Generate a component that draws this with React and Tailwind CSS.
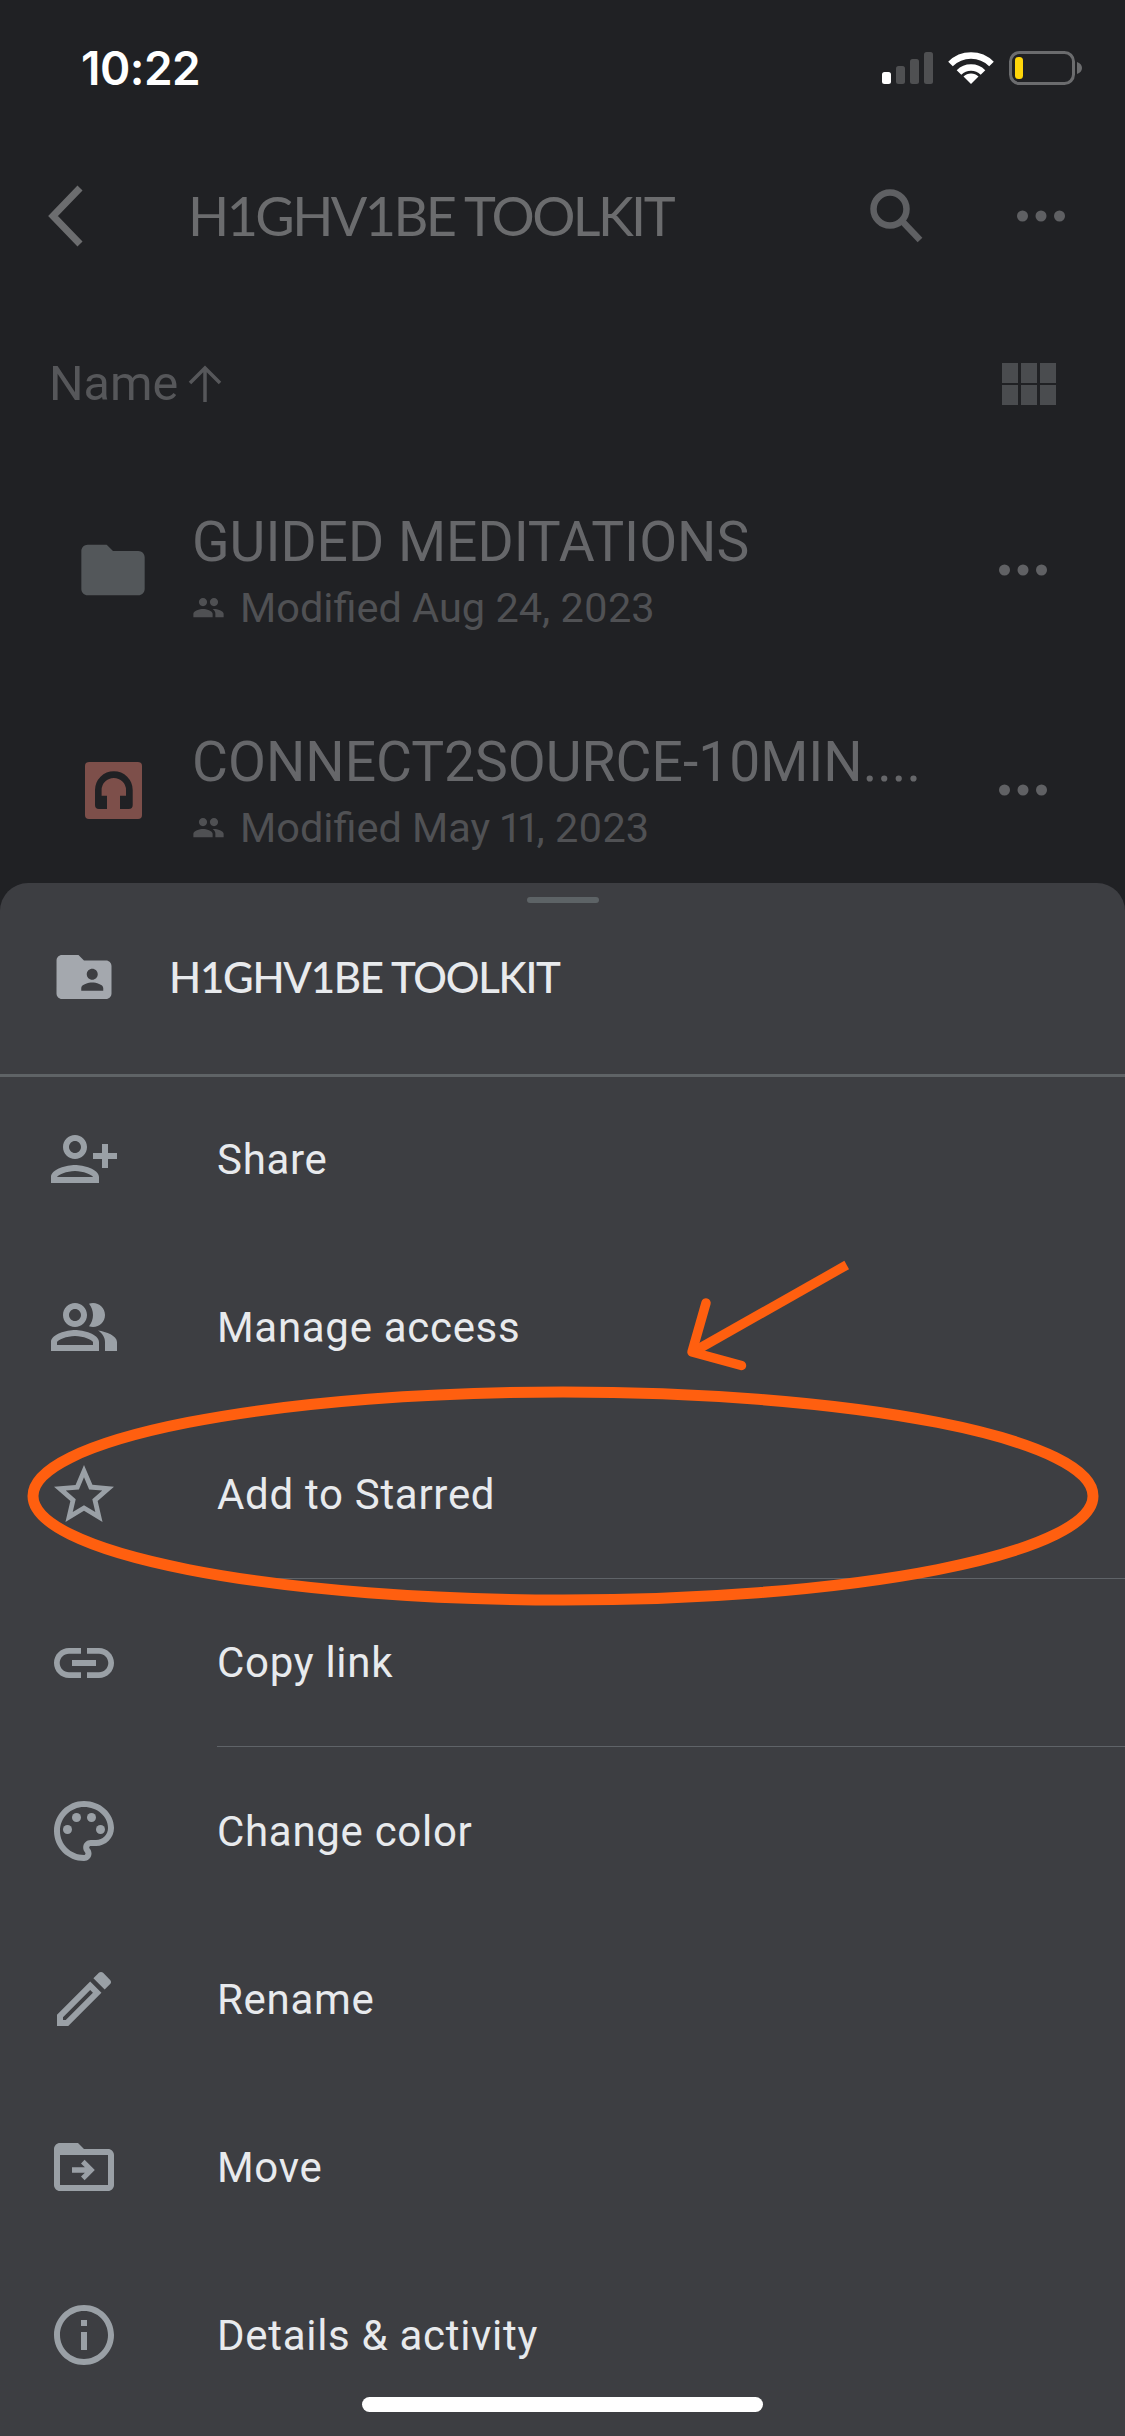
import React from 'react';

const PEOPLE = 'M16 11c1.66 0 2.99-1.34 2.99-3S17.66 5 16 5c-1.66 0-3 1.34-3 3s1.34 3 3 3zm-8 0c1.66 0 2.99-1.34 2.99-3S9.66 5 8 5C6.34 5 5 6.34 5 8s1.34 3 3 3zm0 2c-2.33 0-7 1.17-7 3.5V19h14v-2.5c0-2.33-4.67-3.5-7-3.5zm8 0c-.29 0-.62.02-.97.05 1.16.84 1.97 1.97 1.97 3.45V19h6v-2.5c0-2.33-4.67-3.5-7-3.5z';

function Icon({ children, className = 'w-[72px] h-[72px]' }) {
  return (
    <svg viewBox="0 0 24 24" fill="currentColor" className={className}>
      {children}
    </svg>
  );
}

function Dots({ className }) {
  return (
    <svg viewBox="0 0 48 12" fill="currentColor" className={className}>
      <circle cx="5.5" cy="6" r="5.5" />
      <circle cx="24" cy="6" r="5.5" />
      <circle cx="42.5" cy="6" r="5.5" />
    </svg>
  );
}

function StatusIcons() {
  return (
    <svg viewBox="0 0 200 34" className="w-[200px] h-[34px]">
      <rect x="0" y="21" width="9" height="12" rx="2.5" fill="#ffffff" />
      <rect x="14" y="15" width="9" height="18" rx="2.5" fill="#4f5052" />
      <rect x="28" y="8" width="9" height="25" rx="2.5" fill="#4f5052" />
      <rect x="42" y="1" width="9" height="32" rx="2.5" fill="#4f5052" />
      <g fill="none" stroke="#ffffff" strokeWidth="6.5">
        <path d="M68.5 13 A29 29 0 0 1 109.5 13" />
        <path d="M77 21.5 A17 17 0 0 1 101 21.5" />
      </g>
      <path d="M89 33 L81.5 25.5 A10.6 10.6 0 0 1 96.5 25.5 Z" fill="#ffffff" />
      <rect x="128.5" y="1.5" width="63" height="31" rx="9" fill="none" stroke="#6b6c6e" strokeWidth="3" />
      <rect x="133" y="6" width="8" height="22" rx="3.5" fill="#ffd60a" />
      <path d="M195 11 C198 12 200 14 200 17 C200 20 198 22 195 23 Z" fill="#6b6c6e" />
    </svg>
  );
}

function FileRow({ icon, name, modified }) {
  return (
    <div className="h-[220px] flex items-center pl-[75px] pr-[78px]">
      <div className="w-[76px] flex justify-center shrink-0">{icon}</div>
      <div className="ml-[41px] flex-1 min-w-0 pt-[2px]">
        <div className="text-[55.2px] leading-[62px] text-[#66676a] whitespace-nowrap">{name}</div>
        <div className="mt-[11px] flex items-center text-[#4f5053]">
          <Icon className="w-[33px] h-[33px]"><path d={PEOPLE} /></Icon>
          <span className="ml-[15px] text-[41.5px] leading-[48px] text-[#505154] proportional-nums">{modified}</span>
        </div>
      </div>
      <Dots className="w-[48px] h-[12px] text-[#606164] shrink-0" />
    </div>
  );
}

function MenuRow({ icon, label, divider }) {
  return (
    <div className="h-[168px] flex items-stretch">
      <div className="w-[217px] pl-[48px] flex items-center shrink-0 text-[#9aa0a6]">
        <Icon>{icon}</Icon>
      </div>
      <div className={`flex-1 flex items-center text-[42px] tracking-[0.7px] text-[#e8eaed] ${divider ? 'border-b border-[#5f6368]' : ''}`}>
        {label}
      </div>
    </div>
  );
}

const menuItems = [
  {
    label: 'Share',
    icon: <path transform="translate(24 0) scale(-1 1)" d="M15 12c2.21 0 4-1.79 4-4s-1.79-4-4-4-4 1.79-4 4 1.79 4 4 4zm0-6c1.1 0 2 .9 2 2s-.9 2-2 2-2-.9-2-2 .9-2 2-2zm0 8c-2.67 0-8 1.34-8 4v2h16v-2c0-2.66-5.33-4-8-4zm-6 4c.22-.72 3.31-2 6-2 2.7 0 5.8 1.29 6 2H9zm-3-3v-3h3v-2H6V7H4v3H1v2h3v3h2z" />,
  },
  {
    label: 'Manage access',
    icon: <path d="M16.67 13.13C18.04 14.06 19 15.32 19 17v3h4v-3c0-2.18-3.57-3.47-6.33-3.87zM15 12c2.21 0 4-1.79 4-4s-1.79-4-4-4c-.47 0-.91.1-1.33.24C14.5 5.27 15 6.58 15 8s-.5 2.73-1.33 3.76c.42.14.86.24 1.33.24zM9 12c2.21 0 4-1.79 4-4s-1.79-4-4-4-4 1.79-4 4 1.79 4 4 4zm0-6c1.1 0 2 .9 2 2s-.9 2-2 2-2-.9-2-2 .9-2 2-2zM9 13c-2.67 0-8 1.34-8 4v3h16v-3c0-2.66-5.33-4-8-4zm6 5H3v-.99C3.2 16.29 6.3 15 9 15s5.8 1.29 6 2v1z" />,
  },
  {
    label: 'Add to Starred',
    divider: true,
    icon: <path d="M22 9.24l-7.19-.62L12 2 9.19 8.63 2 9.24l5.46 4.73L5.82 21 12 17.27 18.18 21l-1.63-7.03L22 9.24zM12 15.4l-3.76 2.27 1-4.28-3.32-2.88 4.38-.38L12 6.1l1.71 4.04 4.38.38-3.32 2.88 1 4.28L12 15.4z" />,
  },
  {
    label: 'Copy link',
    divider: true,
    icon: <path d="M3.9 12c0-1.71 1.39-3.1 3.1-3.1h4V7H7c-2.76 0-5 2.24-5 5s2.24 5 5 5h4v-1.9H7c-1.71 0-3.1-1.39-3.1-3.1zM8 13h8v-2H8v2zm9-6h-4v1.9h4c1.71 0 3.1 1.39 3.1 3.1s-1.39 3.1-3.1 3.1h-4V17h4c2.76 0 5-2.24 5-5s-2.24-5-5-5z" />,
  },
  {
    label: 'Change color',
    icon: (
      <>
        <path d="M12 22C6.49 22 2 17.51 2 12S6.49 2 12 2s10 4.04 10 9c0 3.31-2.69 6-6 6h-1.77c-.28 0-.5.22-.5.5 0 .12.05.23.13.33.41.47.64 1.06.64 1.67 0 1.38-1.12 2.5-2.5 2.5zm0-18c-4.41 0-8 3.59-8 8s3.59 8 8 8c.28 0 .5-.22.5-.5 0-.16-.08-.28-.14-.35-.41-.46-.63-1.05-.63-1.65 0-1.38 1.12-2.5 2.5-2.5H16c2.21 0 4-1.79 4-4 0-3.86-3.59-7-8-7z" />
        <circle cx="6.5" cy="11.5" r="1.5" />
        <circle cx="9.5" cy="7.5" r="1.5" />
        <circle cx="14.5" cy="7.5" r="1.5" />
        <circle cx="17.5" cy="11.5" r="1.5" />
      </>
    ),
  },
  {
    label: 'Rename',
    icon: <path d="M14.06 9.02l.92.92L5.92 19H5v-.92l9.06-9.06M17.66 3c-.25 0-.51.1-.7.29l-1.83 1.83 3.75 3.75 1.83-1.83c.39-.39.39-1.02 0-1.41l-2.34-2.34c-.2-.2-.45-.29-.71-.29zm-3.6 3.19L3 17.25V21h3.75L17.81 9.94l-3.75-3.75z" />,
  },
  {
    label: 'Move',
    icon: <path fillRule="evenodd" d="M20 6h-8l-2-2H4c-1.1 0-2 .9-2 2v12c0 1.1.9 2 2 2h16c1.1 0 2-.9 2-2V8c0-1.1-.9-2-2-2zm0 12H4V8h16v10zM12.2 9.6l-1.2 1.2 1.3 1.3H8v1.8h4.3L11 15.2l1.2 1.2 3.4-3.4z" />,
  },
  {
    label: 'Details & activity',
    icon: <path d="M11 7h2v2h-2zm0 4h2v6h-2zm1-9C6.48 2 2 6.48 2 12s4.48 10 10 10 10-4.48 10-10S17.52 2 12 2zm0 18c-4.41 0-8-3.59-8-8s3.59-8 8-8 8 3.59 8 8-3.59 8-8 8z" />,
  },
];

export default function App() {
  return (
    <div className="relative w-[1125px] h-[2436px] bg-[#202124] overflow-hidden flex flex-col font-['Roboto',sans-serif]">
      {/* status bar */}
      <div className="h-[136px] shrink-0 flex items-center justify-between pl-[81px] pr-[43px]">
        <span className="text-[46px] font-semibold text-white font-['Inter',sans-serif] tracking-[-0.5px]">10:22</span>
        <StatusIcons />
      </div>

      {/* nav */}
      <div className="h-[160px] shrink-0 flex items-center pl-[46px] pr-[60px]">
        <svg viewBox="0 0 40 64" className="w-[40px] h-[64px]" fill="none" stroke="#6c6d6f" strokeWidth="7">
          <path d="M34 4 L7 32 L34 60" />
        </svg>
        <div className="ml-[102px] flex-1 text-[54px] leading-none tracking-[-2.6px] text-[#6b6c6e] font-['Lato',sans-serif] whitespace-nowrap">H1GHV1BE TOOLKIT</div>
        <svg viewBox="0 0 54 54" className="mr-[-2px] w-[54px] h-[54px]" fill="none" stroke="#5f6063" strokeWidth="6.5">
          <circle cx="20" cy="20" r="16.5" />
          <path d="M32 32 L50 51" />
        </svg>
        <Dots className="ml-[95px] w-[48px] h-[12px] text-[#5f6063]" />
      </div>

      {/* sort row */}
      <div className="h-[164px] shrink-0 pt-[12px] flex items-center justify-between pl-[49px] pr-[69px]">
        <div className="flex items-center text-[#56575a]">
          <span className="text-[48.5px] leading-none">Name</span>
          <svg viewBox="0 0 36 38" className="ml-[9px] w-[36px] h-[38px]" fill="none" stroke="currentColor" strokeWidth="3.5">
            <path d="M18 37 V3 M3 18 L18 3 L33 18" />
          </svg>
        </div>
        <div className="grid grid-cols-3 grid-rows-2 gap-[2.5px] w-[54px] h-[42px]">
          <div className="bg-[#4a4c4f]" />
          <div className="bg-[#4a4c4f]" />
          <div className="bg-[#4a4c4f]" />
          <div className="bg-[#4a4c4f]" />
          <div className="bg-[#4a4c4f]" />
          <div className="bg-[#4a4c4f]" />
        </div>
      </div>

      {/* files behind the sheet */}
      <div className="h-[423px] shrink-0 overflow-hidden">
        <FileRow
          name="GUIDED MEDITATIONS"
          modified="Modified Aug 24, 2023"
          icon={
            <Icon className="w-[76px] h-[76px] text-[#53575a]">
              <path d="M10 4H4c-1.1 0-2 .9-2 2v12c0 1.1.9 2 2 2h16c1.1 0 2-.9 2-2V8c0-1.1-.9-2-2-2h-8l-2-2z" />
            </Icon>
          }
        />
        <FileRow
          name="CONNECT2SOURCE-10MIN...."
          modified="Modified May 11, 2023"
          icon={
            <svg viewBox="0 0 57 57" className="w-[57px] h-[57px]">
              <rect width="57" height="57" rx="4" fill="#7d4f4a" />
              <path d="M10 43 V28 a18.8 18.8 0 0 1 37.7 0 V43 a4 4 0 0 1 -4 4 H35 V33.7 H41 V28 a12.2 12 0 0 0 -24.4 0 V33.7 H22 V47 H14 a4 4 0 0 1 -4 -4 Z" fill="#202124" />
            </svg>
          }
        />
      </div>

      {/* bottom sheet */}
      <div className="flex-1 bg-[#3d3e42] rounded-t-[28px] flex flex-col">
        <div className="mt-[14px] mx-auto w-[72px] h-[6px] rounded-full bg-[#5d6366] shrink-0" />
        <div className="h-[148px] mb-[23px] shrink-0 flex items-center pl-[51px]">
          <Icon className="w-[66px] h-[66px] text-[#a4a8ae]">
            <path d="M20 6h-8l-2-2H4c-1.1 0-1.99.9-1.99 2L2 18c0 1.1.9 2 2 2h16c1.1 0 2-.9 2-2V8c0-1.1-.9-2-2-2zm-5 3c1.1 0 2 .9 2 2s-.9 2-2 2-2-.9-2-2 .9-2 2-2zm4 8h-8v-1c0-1.33 2.67-2 4-2s4 .67 4 2v1z" />
          </Icon>
          <span className="ml-[52px] text-[42px] font-medium tracking-[-1.25px] text-[#e8eaed] font-['Lato',sans-serif]">H1GHV1BE TOOLKIT</span>
        </div>
        <div className="h-[3px] bg-[#5f6366] shrink-0" />
        <div className="-mt-[2px] flex flex-col">
          {menuItems.map((item) => (
            <MenuRow key={item.label} {...item} />
          ))}
        </div>
      </div>

      {/* hand drawn annotation */}
      <svg viewBox="0 0 1125 2436" className="absolute inset-0 w-[1125px] h-[2436px] pointer-events-none" fill="none" stroke="#ff5f0f" strokeWidth="11">
        <ellipse cx="563" cy="1496" rx="530" ry="104" />
        <path d="M846.7 1265 L693 1352" strokeWidth="9.5" />
        <path d="M706 1303 L692 1352 L741.5 1365.5" strokeWidth="9.5" strokeLinecap="round" strokeLinejoin="round" />
      </svg>

      <div className="absolute left-[362px] top-[2397px] w-[401px] h-[15px] rounded-full bg-white" />
    </div>
  );
}
